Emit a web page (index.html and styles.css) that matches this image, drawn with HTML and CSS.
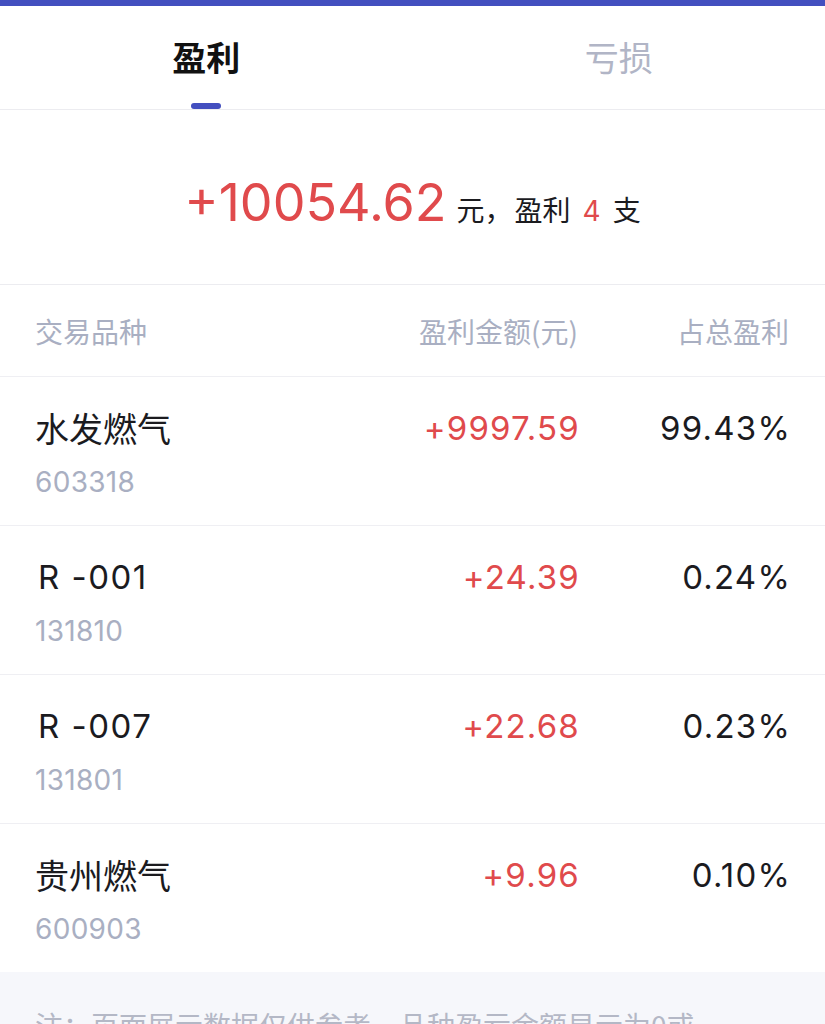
FILE: index.html
```html
<!DOCTYPE html>
<html lang="zh-CN">
<head>
  <meta charset="UTF-8">
  <meta name="viewport" content="width=device-width, initial-scale=1.0">
  <title>盈亏分布</title>
  <link rel="stylesheet" href="styles.css">
</head>
<body>

  <div class="top-bar"></div>

  <nav class="tabs">
    <div class="tab active">
      <span class="tab-label">盈利</span>
      <span class="tab-line"></span>
    </div>
    <div class="tab">
      <span class="tab-label">亏损</span>
      <span class="tab-line"></span>
    </div>
  </nav>

  <section class="summary">
    <span class="summary-total">+10054.62</span>
    <span class="summary-text">元，</span>
    <span class="summary-text gap">盈利</span>
    <span class="summary-count">4</span>
    <span class="summary-text">支</span>
  </section>

  <div class="table">
    <div class="row head">
      <span class="col-name">交易品种</span>
      <span class="col-amount">盈利金额(元)</span>
      <span class="col-rate">占总盈利</span>
    </div>

    <div class="row">
      <div class="col-name">
        <div class="stock-name">水发燃气</div>
        <div class="stock-code">603318</div>
      </div>
      <span class="col-amount num red">+9997.59</span>
      <span class="col-rate num">99.43%</span>
    </div>

    <div class="row">
      <div class="col-name">
        <div class="stock-name latin">R -001</div>
        <div class="stock-code">131810</div>
      </div>
      <span class="col-amount num red">+24.39</span>
      <span class="col-rate num">0.24%</span>
    </div>

    <div class="row">
      <div class="col-name">
        <div class="stock-name latin">R -007</div>
        <div class="stock-code">131801</div>
      </div>
      <span class="col-amount num red">+22.68</span>
      <span class="col-rate num">0.23%</span>
    </div>

    <div class="row last">
      <div class="col-name">
        <div class="stock-name">贵州燃气</div>
        <div class="stock-code">600903</div>
      </div>
      <span class="col-amount num red">+9.96</span>
      <span class="col-rate num">0.10%</span>
    </div>
  </div>

  <footer class="note">
    注：页面展示数据仅供参考，品种盈亏金额显示为0或<span class="dash">—</span>时，表示该品种暂无盈亏数据。
  </footer>

</body>
</html>
```

FILE: styles.css
```css
body {
  margin: 0;
  padding: 0;
  width: 825px;
  min-height: 1024px;
  background-color: #fff;
  font-family: Inter, "Noto Sans CJK SC", sans-serif;
  color: #1b1b1f;
}

.top-bar {
  height: 6px;
  background-color: #434fbf;
}

.tabs {
  display: flex;
  height: 103px;
  border-bottom: 1px solid #ececf0;
}

.tab {
  flex: 1;
  display: flex;
  flex-direction: column;
  align-items: center;
  padding-top: 27px;
}

.tab-label {
  font-family: "Noto Sans CJK SC", sans-serif;
  font-size: 34px;
  line-height: 48px;
  color: #b1b5c6;
}

.tab-line {
  width: 30px;
  height: 6px;
  margin-top: 22px;
  border-radius: 3px;
}

.tab.active .tab-label {
  color: #111;
  font-weight: 700;
}

.tab.active .tab-line {
  background-color: #434fbf;
}

.summary {
  height: 175px;
  display: flex;
  justify-content: center;
  align-items: baseline;
  border-bottom: 1px solid #ececf0;
  box-sizing: border-box;
  line-height: 1;
}

.summary > span {
  margin-top: 67px;
}

.summary-total {
  font-size: 52px;
  color: #e04a4c;
  margin-right: 10px;
}

.summary-text {
  font-family: "Noto Sans CJK SC", sans-serif;
  font-size: 28px;
  color: #1b1b1f;
}

.summary-text.gap {
  margin-left: 2px;
}

.summary-count {
  font-size: 28px;
  color: #e04a4c;
  margin: 0 12px;
}

.row {
  display: grid;
  grid-template-columns: 1fr 240px 211px;
  padding: 31px 34px 0 35px;
  border-bottom: 1px solid #efeff3;
}

.row.head {
  height: 91px;
  padding-top: 0;
  align-items: center;
  font-family: "Noto Sans CJK SC", sans-serif;
  font-size: 28px;
  color: #a9afc2;
}

.row.head .col-amount,
.row.head .col-rate {
  margin-right: 2px;
}

.row:not(.head) {
  height: 117px;
  align-items: start;
}

.row.last {
  border-bottom: none;
}

.col-amount,
.col-rate {
  text-align: right;
}

.stock-name {
  font-family: "Noto Sans CJK SC", sans-serif;
  font-size: 34px;
  line-height: 40px;
}

.stock-name.latin {
  font-family: Inter, "Noto Sans CJK SC", sans-serif;
  font-size: 33px;
  letter-spacing: 1.5px;
  padding-left: 3px;
}

.stock-code {
  margin-top: 17px;
  font-size: 28px;
  line-height: 34px;
  letter-spacing: 0.3px;
  color: #a9afc2;
}

.num {
  font-size: 33px;
  line-height: 40px;
  letter-spacing: 1.2px;
}

.red {
  color: #e04a4c;
}

.note {
  background-color: #f6f7fb;
  padding: 31px 35px 40px;
  font-family: "Noto Sans CJK SC", sans-serif;
  font-size: 28px;
  line-height: 44px;
  color: #b4b8c6;
}

.dash {
  margin: 0 14px 0 66px;
}
```
